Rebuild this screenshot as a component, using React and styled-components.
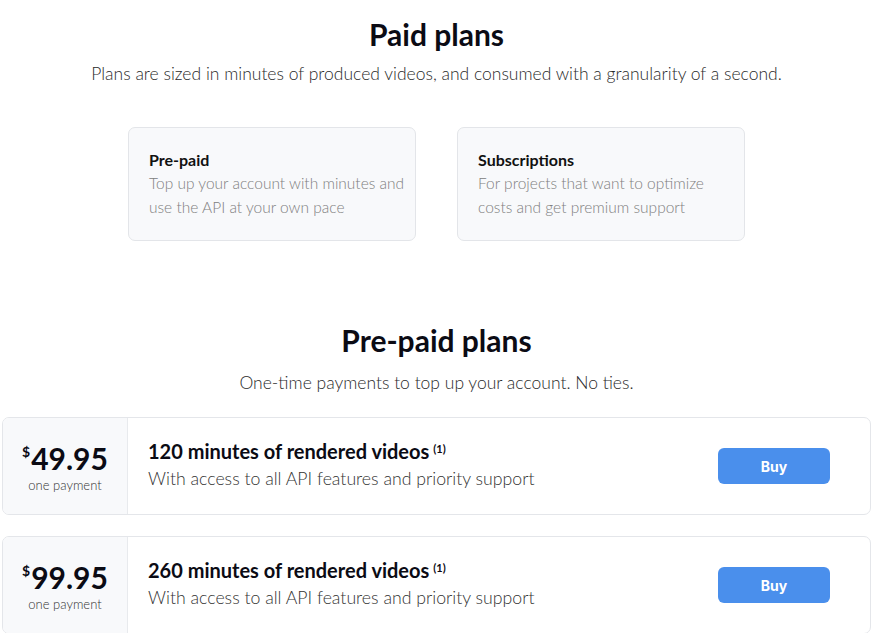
import React from "react";
import styled, { createGlobalStyle } from "styled-components";

const Global = createGlobalStyle`
  html, body { margin: 0; padding: 0; background: #fff; }
  body { font-family: Lato, "Noto Sans", sans-serif; color: #111; }
`;

const light = `"Lato Light", Lato, "Noto Sans", sans-serif`;

const Page = styled.div`
  padding: 14px 6px 0 2px;
  display: flex;
  flex-direction: column;
  align-items: stretch;
`;

const Section = styled.section`
  display: flex;
  flex-direction: column;
  align-items: center;
  margin-top: ${(p) => p.$top || 0}px;
`;

const Heading = styled.h2`
  margin: 0;
  font-size: 30px;
  font-weight: 700;
  line-height: 40px;
  color: #0b0b14;
`;

const Lead = styled.p`
  margin: ${(p) => p.$gap || 8}px 0 0;
  font-family: ${light};
  font-size: 17.5px;
  font-weight: 300;
  line-height: 24px;
  color: #2a2a2a;
`;

const Cards = styled.div`
  display: flex;
  gap: 41px;
  margin-top: 41px;
`;

const Card = styled.div`
  width: 288px;
  height: 114px;
  box-sizing: border-box;
  background: #f8f9fb;
  border: 1px solid #e3e5e9;
  border-radius: 7px;
  padding: 21px 6px 20px 20px;
`;

const CardTitle = styled.div`
  font-size: 16px;
  font-weight: 700;
  line-height: 22px;
  color: #111;
`;

const CardText = styled.div`
  font-family: ${light};
  font-size: 15.5px;
  font-weight: 300;
  line-height: 24px;
  color: #808080;
`;

const Plans = styled.div`
  display: flex;
  flex-direction: column;
  gap: 21px;
  align-self: stretch;
  margin-top: 22px;
`;

const Plan = styled.div`
  display: flex;
  align-items: stretch;
  height: 98px;
  box-sizing: border-box;
  border: 1px solid #e4e6ea;
  border-radius: 7px;
  overflow: hidden;
`;

const PriceCell = styled.div`
  width: 124px;
  flex: none;
  background: #f8f9fb;
  border-right: 1px solid #e8eaed;
  display: flex;
  flex-direction: column;
  align-items: center;
  justify-content: center;
  padding-top: 4px;
`;

const Price = styled.div`
  font-size: 30px;
  font-weight: 700;
  line-height: 34px;
  color: #0b0b14;
  display: flex;
  align-items: flex-start;
`;

const Currency = styled.span`
  font-size: 14px;
  line-height: 22px;
  font-weight: 700;
  margin-right: 1px;
`;

const PriceNote = styled.div`
  font-family: ${light};
  font-size: 13px;
  font-weight: 300;
  line-height: 20px;
  color: #333;
`;

const Info = styled.div`
  flex: 1;
  display: flex;
  flex-direction: column;
  justify-content: center;
  padding-left: 20px;
  padding-bottom: 2px;
`;

const PlanTitle = styled.div`
  font-size: 20px;
  font-weight: 700;
  line-height: 28px;
  color: #0b0b14;
`;

const Note = styled.sup`
  font-size: 11px;
  font-weight: 700;
  margin-left: 4px;
  vertical-align: 6px;
  line-height: 0;
`;

const PlanText = styled.div`
  font-family: ${light};
  font-size: 17.7px;
  font-weight: 300;
  line-height: 28px;
  color: #333;
`;

const Action = styled.div`
  display: flex;
  align-items: center;
  padding-right: 40px;
`;

const BuyButton = styled.button`
  width: 112px;
  height: 36px;
  border: none;
  border-radius: 6px;
  background: #4a8fec;
  color: #fff;
  font-family: Inter, "Noto Sans", sans-serif;
  font-weight: 700;
  font-size: 14px;
  cursor: pointer;
`;

const plans = [
  { price: "49.95", minutes: 120 },
  { price: "99.95", minutes: 260 },
];

export default function App() {
  return (
    <>
      <Global />
      <Page>
        <Section>
          <Heading>Paid plans</Heading>
          <Lead>
            Plans are sized in minutes of produced videos, and consumed with a
            granularity of a second.
          </Lead>
          <Cards>
            <Card>
              <CardTitle>Pre-paid</CardTitle>
              <CardText>
                Top up your account with minutes and
                <br />
                use the API at your own pace
              </CardText>
            </Card>
            <Card>
              <CardTitle>Subscriptions</CardTitle>
              <CardText>
                For projects that want to optimize
                <br />
                costs and get premium support
              </CardText>
            </Card>
          </Cards>
        </Section>
        <Section $top={79}>
          <Heading>Pre-paid plans</Heading>
          <Lead $gap={11}>One-time payments to top up your account. No ties.</Lead>
          <Plans>
            {plans.map((p) => (
              <Plan key={p.price}>
                <PriceCell>
                  <Price>
                    <Currency>$</Currency>
                    {p.price}
                  </Price>
                  <PriceNote>one payment</PriceNote>
                </PriceCell>
                <Info>
                  <PlanTitle>
                    {p.minutes} minutes of rendered videos<Note>(1)</Note>
                  </PlanTitle>
                  <PlanText>
                    With access to all API features and priority support
                  </PlanText>
                </Info>
                <Action>
                  <BuyButton>Buy</BuyButton>
                </Action>
              </Plan>
            ))}
          </Plans>
        </Section>
      </Page>
    </>
  );
}
